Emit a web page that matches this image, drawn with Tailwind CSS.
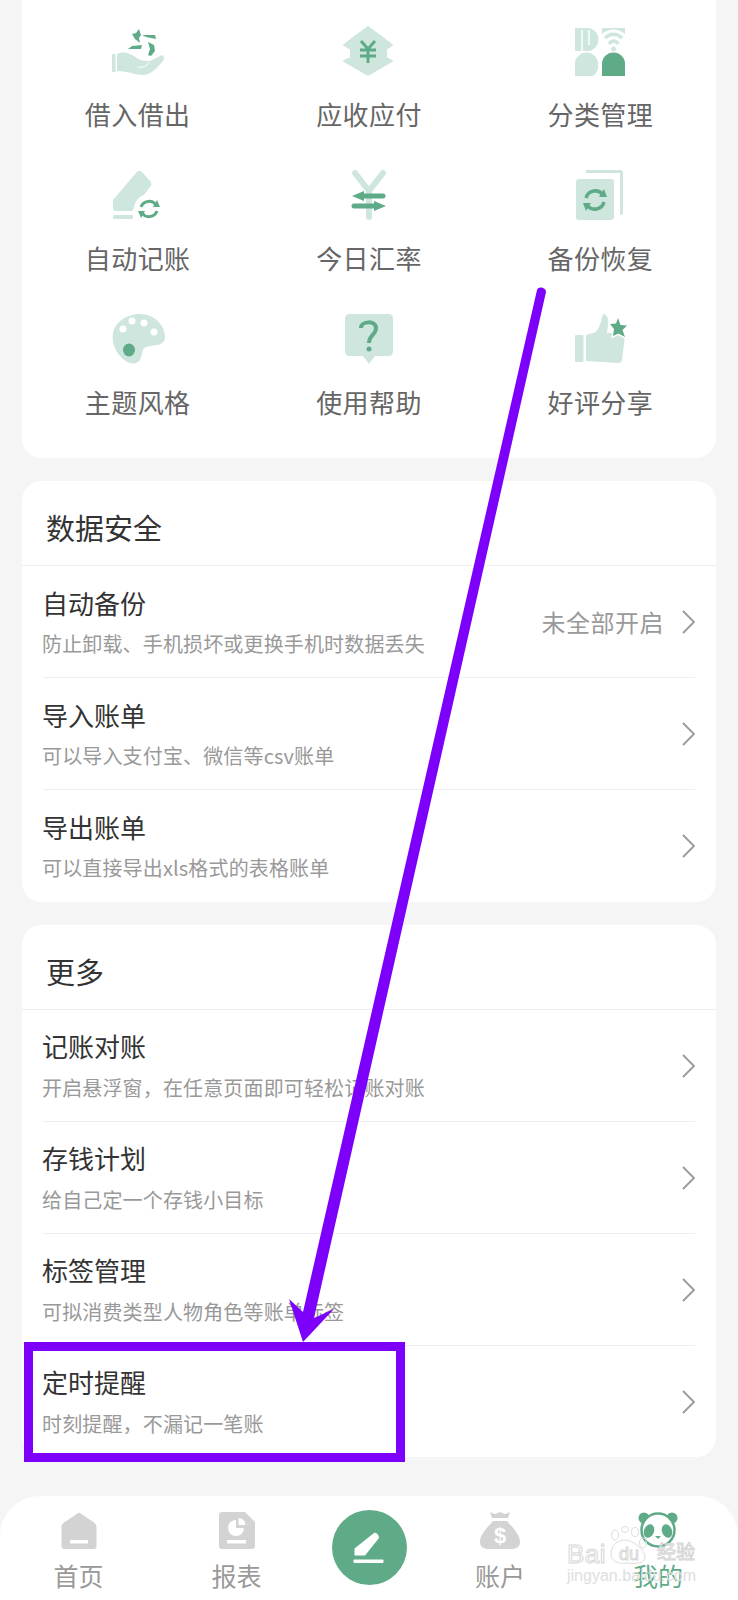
<!DOCTYPE html>
<html lang="zh-CN">

<head>
	<meta charset="UTF-8">
	<meta name="viewport" content="width=device-width, initial-scale=1.0">
	<title>我的</title>
	<script src="https://cdn.jsdelivr.net/npm/@tailwindcss/browser@4"></script>
</head>

<body class="bg-[#f5f5f5]">
	<div class="relative w-[738px] h-[1600px] overflow-hidden flex flex-col bg-[#f5f5f5] font-['Noto_Sans_CJK_SC','Noto_Sans',sans-serif]">
		<main class="px-[22px] flex flex-col gap-[23px]">
			<!-- Tool grid -->
			<section class="h-[458px] bg-white rounded-b-[20px] grid grid-cols-3 gap-y-[37px] pt-[25px] content-start">
				<div class="flex flex-col items-center gap-[19px]">
					<svg class="w-[56px] h-[52px]" viewBox="0 0 56 52">
						<rect x="2" y="29" width="3.500" height="18" fill="#cfe6de" />
						<path d="M7 29 C13 26 20 28 27 33 C31 36 37 36 40 36 L52 30 C55 31 54 35 52 37 C46 44 40 50 33 50 C25 50 18 46 7 46 Z" fill="#cfe6de" />
						<path d="M28 42 C33 43 37 41 39 37" fill="none" stroke="#fff" stroke-width="1" />
						<path d="M29 4 L26 8 L22 9 L25 14 L30 18 L29 13 L31 10 Z" fill="#5fab88" />
						<path d="M32 10 L45 10 L46 14 L36 12 Z M18 24 L22 21 L32 20 L31 24 Z" fill="#5fab88" />
						<path d="M38 17 L44 20 L45 26 L41 31 L38 30 L40 24 Z" fill="#5fab88" />
					</svg>
					<span class="h-[36px] leading-[36px] text-[26px] tracking-[0.4px] text-[#666]">借入借出</span>
				</div>
				<div class="flex flex-col items-center gap-[19px]">
					<svg class="w-[56px] h-[52px]" viewBox="0 0 56 52">
						<path d="M27 2 L51 20 L45 24 L45 33 L51 36 L27 50 L3 36 L10 33 L10 24 L3 20 Z" fill="#cfe6de" stroke="#cfe6de" stroke-width="2" stroke-linejoin="round" />
						<path d="M20 16 L27 24 L34 16 M19 25 H35 M19 31 H35 M27 24 V38" fill="none" stroke="#5fab88" stroke-width="3" />
					</svg>
					<span class="h-[36px] leading-[36px] text-[26px] tracking-[0.4px] text-[#666]">应收应付</span>
				</div>
				<div class="flex flex-col items-center gap-[19px]">
					<svg class="w-[56px] h-[52px]" viewBox="0 0 56 52">
						<path d="M3 3 H15 A11.500 11.500 0 0 1 15 26 H3 Z" fill="#cfe6de" />
						<path d="M10 5 V26 M17 5 V20" stroke="#fff" stroke-width="1.500" fill="none" />
						<path d="M30 3 H53 V9 C46 3 37 3 30 9 Z" fill="#cfe6de" />
						<path d="M33 13 C38 8 45 8 50 13 M37 19 C40 15 44 15 46 19" fill="none" stroke="#cfe6de" stroke-width="3.500" />
						<circle cx="41.500" cy="24" r="2.500" fill="#cfe6de" />
						<path d="M3 51 V39 A11.500 11.500 0 0 1 26 39 A11.500 12 0 0 1 21 51 Z" fill="#cfe6de" />
						<path d="M30 51 V39 A11.500 11.500 0 0 1 53 39 V51 Z" fill="#5fab88" />
					</svg>
					<span class="h-[36px] leading-[36px] text-[26px] tracking-[0.4px] text-[#666]">分类管理</span>
				</div>

				<div class="flex flex-col items-center gap-[19px]">
					<svg class="w-[56px] h-[52px]" viewBox="0 0 56 52">
						<path d="M26 4 C28 1 31 2 33 4 L41 13 C42 15 41 17 40 18 L22 42 H6 C4 42 3 41 3 39 V31 Z" fill="#cfe6de" />
						<rect x="3" y="46" width="20" height="4" rx="1" fill="#cfe6de" />
						<circle cx="39" cy="40" r="15" fill="#fff" />
						<path d="M31 38 A8.500 8.500 0 0 1 46 36 M47 42 A8.500 8.500 0 0 1 32 44" fill="none" stroke="#5fab88" stroke-width="3" />
						<path d="M43 38 L50 38 L47 31 Z M35 42 L28 42 L31 49 Z" fill="#5fab88" />
					</svg>
					<span class="h-[36px] leading-[36px] text-[26px] tracking-[0.4px] text-[#666]">自动记账</span>
				</div>
				<div class="flex flex-col items-center gap-[19px]">
					<svg class="w-[56px] h-[52px]" viewBox="0 0 56 52">
						<path d="M14 4 L28 22 L42 4 M28 22 V48" fill="none" stroke="#cfe6de" stroke-width="6" stroke-linecap="round" stroke-linejoin="round" />
						<path d="M23 22 L11 27 L23 32 Z M33 32 L45 37 L33 42 Z" fill="#5fab88" />
						<path d="M21 27 H42 M13 37 H35" stroke="#5fab88" stroke-width="5" stroke-linecap="round" fill="none" />
					</svg>
					<span class="h-[36px] leading-[36px] text-[26px] tracking-[0.4px] text-[#666]">今日汇率</span>
				</div>
				<div class="flex flex-col items-center gap-[19px]">
					<svg class="w-[56px] h-[52px]" viewBox="0 0 56 52">
						<path d="M14 1 H49 C50 1 51 2 51 3 V44 C51 45 50 46 48 46 V4 H14 Z" fill="#cfe6de" />
						<rect x="4" y="10" width="38" height="41" rx="3" fill="#cfe6de" />
						<path d="M14 29 A9.500 9.500 0 0 1 31 26 M32 33 A9.500 9.500 0 0 1 15 36" fill="none" stroke="#5fab88" stroke-width="3.500" />
						<path d="M27 28 L35 28 L32 20 Z M19 34 L11 34 L14 42 Z" fill="#5fab88" />
					</svg>
					<span class="h-[36px] leading-[36px] text-[26px] tracking-[0.4px] text-[#666]">备份恢复</span>
				</div>

				<div class="flex flex-col items-center gap-[19px]">
					<svg class="w-[56px] h-[52px]" viewBox="0 0 56 52">
						<path d="M30 1 C44 1 55 12 55 24 C55 33 44 32 36 34 C31 36 33 42 30 47 C27 52 18 52 11 44 C3 36 2 26 3 20 C5 9 17 1 30 1 Z" fill="#cfe6de" />
						<g fill="#fff">
							<circle cx="13" cy="16" r="3.500" />
							<circle cx="22" cy="8" r="3.500" />
							<circle cx="34" cy="10" r="3.500" />
							<circle cx="44" cy="19" r="3.500" />
						</g>
						<ellipse cx="19" cy="37" rx="6" ry="6.500" fill="#5fab88" />
					</svg>
					<span class="h-[36px] leading-[36px] text-[26px] tracking-[0.4px] text-[#666]">主题风格</span>
				</div>
				<div class="flex flex-col items-center gap-[19px]">
					<svg class="w-[56px] h-[52px]" viewBox="0 0 56 52">
						<path d="M8 1 H48 C50 1 52 3 52 5 V39 C52 41 50 43 48 43 H34 L28 51 L22 43 H8 C6 43 4 41 4 39 V5 C4 3 6 1 8 1 Z" fill="#cfe6de" />
						<path d="M20 15 C20 8 35 7 35 15 C35 22 28 22 28 30" fill="none" stroke="#5fab88" stroke-width="4" />
						<circle cx="28" cy="36" r="2.500" fill="#5fab88" />
					</svg>
					<span class="h-[36px] leading-[36px] text-[26px] tracking-[0.4px] text-[#666]">使用帮助</span>
				</div>
				<div class="flex flex-col items-center gap-[19px]">
					<svg class="w-[56px] h-[52px]" viewBox="0 0 56 52">
						<rect x="3" y="22" width="8.500" height="27" rx="1" fill="#cfe6de" />
						<path d="M14 22 L24 19 C28 14 29 8 31 1 C35 1 37 6 36 12 L35 20 H52 C53 20 53 21 53 23 L50 47 C50 49 48 50 46 50 L14 48 Z" fill="#cfe6de" />
						<path d="M46 5 L48.500 12 L55 12.500 L50.500 17 L53 24 L46.500 20.500 L41 23 L42 16 L38 11 L44 10.500 Z" fill="#fff" stroke="#fff" stroke-width="3" />
						<path d="M46 5 L48.500 12 L55 12.500 L50.500 17 L53 24 L46.500 20.500 L41 23 L42 16 L38 11 L44 10.500 Z" fill="#5fab88" />
					</svg>
					<span class="h-[36px] leading-[36px] text-[26px] tracking-[0.4px] text-[#666]">好评分享</span>
				</div>
			</section>

			<!-- Data safety -->
			<section class="bg-white rounded-[20px]">
				<h2 class="h-[85px] px-[24px] pt-[9px] flex items-center text-[29px] font-normal text-[#333] border-b border-[#eeeeee]">数据安全</h2>
				<ul class="px-[21px]">
					<li class="h-[112px] flex items-center border-b border-[#eeeeee]">
						<div class="flex-1 self-start pt-[20px] -ml-px">
							<p class="h-[34px] leading-[34px] text-[26px] text-[#333]">自动备份</p>
							<p class="mt-[10px] h-[28px] leading-[28px] text-[20px] tracking-[0.15px] text-[#999]">防止卸载、手机损坏或更换手机时数据丢失</p>
						</div>
						<span class="mr-[17px] text-[24px] tracking-[0.5px] text-[#999]">未全部开启</span>
						<svg class="w-[15px] h-[26px] -mr-[1px]" viewBox="0 0 15 26"><path d="M2 2 L13 13 L2 24" fill="none" stroke="#999" stroke-width="1.800" /></svg>
					</li>
					<li class="h-[112px] flex items-center border-b border-[#eeeeee]">
						<div class="flex-1 self-start pt-[20px] -ml-px">
							<p class="h-[34px] leading-[34px] text-[26px] text-[#333]">导入账单</p>
							<p class="mt-[10px] h-[28px] leading-[28px] text-[20px] tracking-[0.15px] text-[#999]">可以导入支付宝、微信等csv账单</p>
						</div>
						<svg class="w-[15px] h-[26px] -mr-[1px]" viewBox="0 0 15 26"><path d="M2 2 L13 13 L2 24" fill="none" stroke="#999" stroke-width="1.800" /></svg>
					</li>
					<li class="h-[112px] flex items-center">
						<div class="flex-1 self-start pt-[20px] -ml-px">
							<p class="h-[34px] leading-[34px] text-[26px] text-[#333]">导出账单</p>
							<p class="mt-[10px] h-[28px] leading-[28px] text-[20px] tracking-[0.15px] text-[#999]">可以直接导出xls格式的表格账单</p>
						</div>
						<svg class="w-[15px] h-[26px] -mr-[1px]" viewBox="0 0 15 26"><path d="M2 2 L13 13 L2 24" fill="none" stroke="#999" stroke-width="1.800" /></svg>
					</li>
				</ul>
			</section>

			<!-- More -->
			<section class="bg-white rounded-[20px]">
				<h2 class="h-[85px] px-[24px] pt-[9px] flex items-center text-[29px] font-normal text-[#333] border-b border-[#eeeeee]">更多</h2>
				<ul class="px-[21px]">
					<li class="h-[112px] flex items-center border-b border-[#eeeeee]">
						<div class="flex-1 self-start pt-[19px] -ml-px">
							<p class="h-[34px] leading-[34px] text-[26px] text-[#333]">记账对账</p>
							<p class="mt-[11px] h-[28px] leading-[28px] text-[20px] tracking-[0.15px] text-[#999]">开启悬浮窗<span class="font-['Noto_Sans_CJK_TC',sans-serif]">，</span>在任意页面即可轻松记账对账</p>
						</div>
						<svg class="w-[15px] h-[26px] -mr-[1px]" viewBox="0 0 15 26"><path d="M2 2 L13 13 L2 24" fill="none" stroke="#999" stroke-width="1.800" /></svg>
					</li>
					<li class="h-[112px] flex items-center border-b border-[#eeeeee]">
						<div class="flex-1 self-start pt-[19px] -ml-px">
							<p class="h-[34px] leading-[34px] text-[26px] text-[#333]">存钱计划</p>
							<p class="mt-[11px] h-[28px] leading-[28px] text-[20px] tracking-[0.15px] text-[#999]">给自己定一个存钱小目标</p>
						</div>
						<svg class="w-[15px] h-[26px] -mr-[1px]" viewBox="0 0 15 26"><path d="M2 2 L13 13 L2 24" fill="none" stroke="#999" stroke-width="1.800" /></svg>
					</li>
					<li class="h-[112px] flex items-center border-b border-[#eeeeee]">
						<div class="flex-1 self-start pt-[19px] -ml-px">
							<p class="h-[34px] leading-[34px] text-[26px] text-[#333]">标签管理</p>
							<p class="mt-[11px] h-[28px] leading-[28px] text-[20px] tracking-[0.15px] text-[#999]">可拟消费类型人物角色等账单标签</p>
						</div>
						<svg class="w-[15px] h-[26px] -mr-[1px]" viewBox="0 0 15 26"><path d="M2 2 L13 13 L2 24" fill="none" stroke="#999" stroke-width="1.800" /></svg>
					</li>
					<li class="h-[111px] flex items-center">
						<div class="flex-1 self-start pt-[19px] -ml-px">
							<p class="h-[34px] leading-[34px] text-[26px] text-[#333]">定时提醒</p>
							<p class="mt-[11px] h-[28px] leading-[28px] text-[20px] tracking-[0.15px] text-[#999]">时刻提醒<span class="font-['Noto_Sans_CJK_TC',sans-serif]">，</span>不漏记一笔账</p>
						</div>
						<svg class="w-[15px] h-[26px] -mr-[1px]" viewBox="0 0 15 26"><path d="M2 2 L13 13 L2 24" fill="none" stroke="#999" stroke-width="1.800" /></svg>
					</li>
				</ul>
			</section>
		</main>

		<!-- Bottom tabs -->
		<nav class="mt-auto h-[104px] bg-white rounded-t-[40px] grid grid-cols-[157px_159px_106px_156px_160px] pt-[16px]">
			<div class="flex flex-col items-center gap-[10px]">
				<svg class="w-[36px] h-[37px]" viewBox="0 0 36 37">
					<path d="M18 1 L33 11 C34 12 35 13 35 15 V34 C35 36 34 37 32 37 H4 C2 37 1 36 1 34 V15 C1 13 2 12 3 11 Z" fill="#d3d3d3" stroke="#d3d3d3" stroke-linejoin="round" />
					<rect x="9" y="28" width="18" height="3.500" fill="#fff" />
				</svg>
				<span class="text-[25px] leading-[32px] text-[#999]">首页</span>
			</div>
			<div class="flex flex-col items-center gap-[10px]">
				<svg class="w-[36px] h-[37px]" viewBox="0 0 36 37">
					<path d="M3 0 H26 L36 10 V34 C36 36 35 37 33 37 H3 C1 37 0 36 0 34 V3 C0 1 1 0 3 0 Z" fill="#d3d3d3" />
					<path d="M17 8 A8 8 0 1 0 25 16 H17 Z" fill="#fff" />
					<path d="M19.500 6 A7 7 0 0 1 26.500 13 H19.500 Z" fill="#fff" />
					<rect x="8" y="28" width="19" height="3.500" fill="#fff" />
				</svg>
				<span class="text-[25px] leading-[32px] text-[#999]">报表</span>
			</div>
			<div class="flex justify-center">
				<div class="w-[75px] h-[75px] mt-[-2px] rounded-full bg-[#5fab88] flex items-center justify-center">
					<svg class="w-[34px] h-[34px]" viewBox="0 0 34 34">
						<path d="M22 2 C24 1 27 4 27 7 L13 24.500 H2.500 V17.500 Z" fill="#fff" />
						<rect x="1.500" y="28.500" width="30" height="3.500" rx="1" fill="#fff" />
					</svg>
				</div>
			</div>
			<div class="flex flex-col items-center gap-[10px]">
				<svg class="w-[40px] h-[37px]" viewBox="0 0 40 37">
					<path d="M10 0 L15 2 L20 0 L25 2 L30 0 L28 6 H12 Z" fill="#d3d3d3" />
					<path d="M13 9 H27 C32 15 40 22 40 30 C40 35 36 37 32 37 H8 C4 37 0 35 0 30 C0 22 8 15 13 9 Z" fill="#d3d3d3" />
					<text x="20" y="31" text-anchor="middle" font-size="22" font-weight="700" fill="#fff" font-family="Liberation Sans, sans-serif">$</text>
				</svg>
				<span class="text-[25px] leading-[32px] text-[#999]">账户</span>
			</div>
			<div class="flex flex-col items-center gap-[10px]">
				<svg class="w-[40px] h-[37px]" viewBox="0 0 40 37">
					<circle cx="6" cy="6" r="5.500" fill="#5fab88" />
					<circle cx="34" cy="6" r="5.500" fill="#5fab88" />
					<circle cx="20" cy="18" r="16.500" fill="#fff" stroke="#5fab88" stroke-width="2.500" />
					<ellipse cx="11" cy="19" rx="5" ry="7" fill="#5fab88" transform="rotate(20 11 19)" />
					<ellipse cx="29" cy="19" rx="5" ry="7" fill="#5fab88" transform="rotate(-20 29 19)" />
					<path d="M17 24 H23 L20 27 Z" fill="#5fab88" />
				</svg>
				<span class="text-[25px] leading-[32px] text-[#5fab88]">我的</span>
			</div>
		</nav>

		<!-- Watermark over the tabs -->
		<div class="absolute left-[567px] top-[1526px] w-[132px] h-[58px]">
			<svg class="absolute left-0 top-0 w-[132px] h-[40px]" viewBox="0 0 132 40">
				<g fill="none" stroke="#dddddd" stroke-width="1">
					<path d="M44 28 C44 20 50 14 58 14 C66 14 78 24 78 31 C78 38 68 38 60 37 C52 38 44 36 44 28 Z" />
					<ellipse cx="48" cy="9" rx="3.500" ry="5" />
					<ellipse cx="58" cy="3.500" rx="3.500" ry="3" />
					<ellipse cx="68" cy="6" rx="3.500" ry="4.500" />
					<ellipse cx="76" cy="17" rx="3.500" ry="5" />
				</g>
			</svg>
			<span class="absolute left-0 top-[15px] text-[26px] leading-[26px] font-['Liberation_Sans',sans-serif] tracking-[0.5px] text-white/40 [-webkit-text-stroke:1px_#d6d6d6]">Bai</span>
			<span class="absolute left-[52px] top-[19px] text-[18px] leading-[18px] font-['Liberation_Sans',sans-serif] text-white/40 [-webkit-text-stroke:1px_#d6d6d6]">du</span>
			<span class="absolute left-[90px] top-[13px] text-[19px] leading-[24px] text-white/40 [-webkit-text-stroke:1px_#d6d6d6]">经验</span>
			<span class="absolute left-0 top-[41px] text-[16px] leading-[18px] font-['Liberation_Sans',sans-serif] text-[#dedede]">jingyan.baidu.com</span>
		</div>

		<!-- Annotation overlay -->
		<svg class="absolute left-0 top-0 w-[738px] h-[1600px] pointer-events-none" viewBox="0 0 738 1600">
			<path d="M537 290 C538 286 546 287 546 292 L314 1318 L334 1309 L303 1342 L289 1299 L303 1312 Z" fill="#7d00fb" />
		</svg>
		<div class="absolute left-[24px] top-[1342px] w-[381px] h-[120px] border-[9px] border-[#7d00fb]"></div>
	</div>
</body>

</html>
